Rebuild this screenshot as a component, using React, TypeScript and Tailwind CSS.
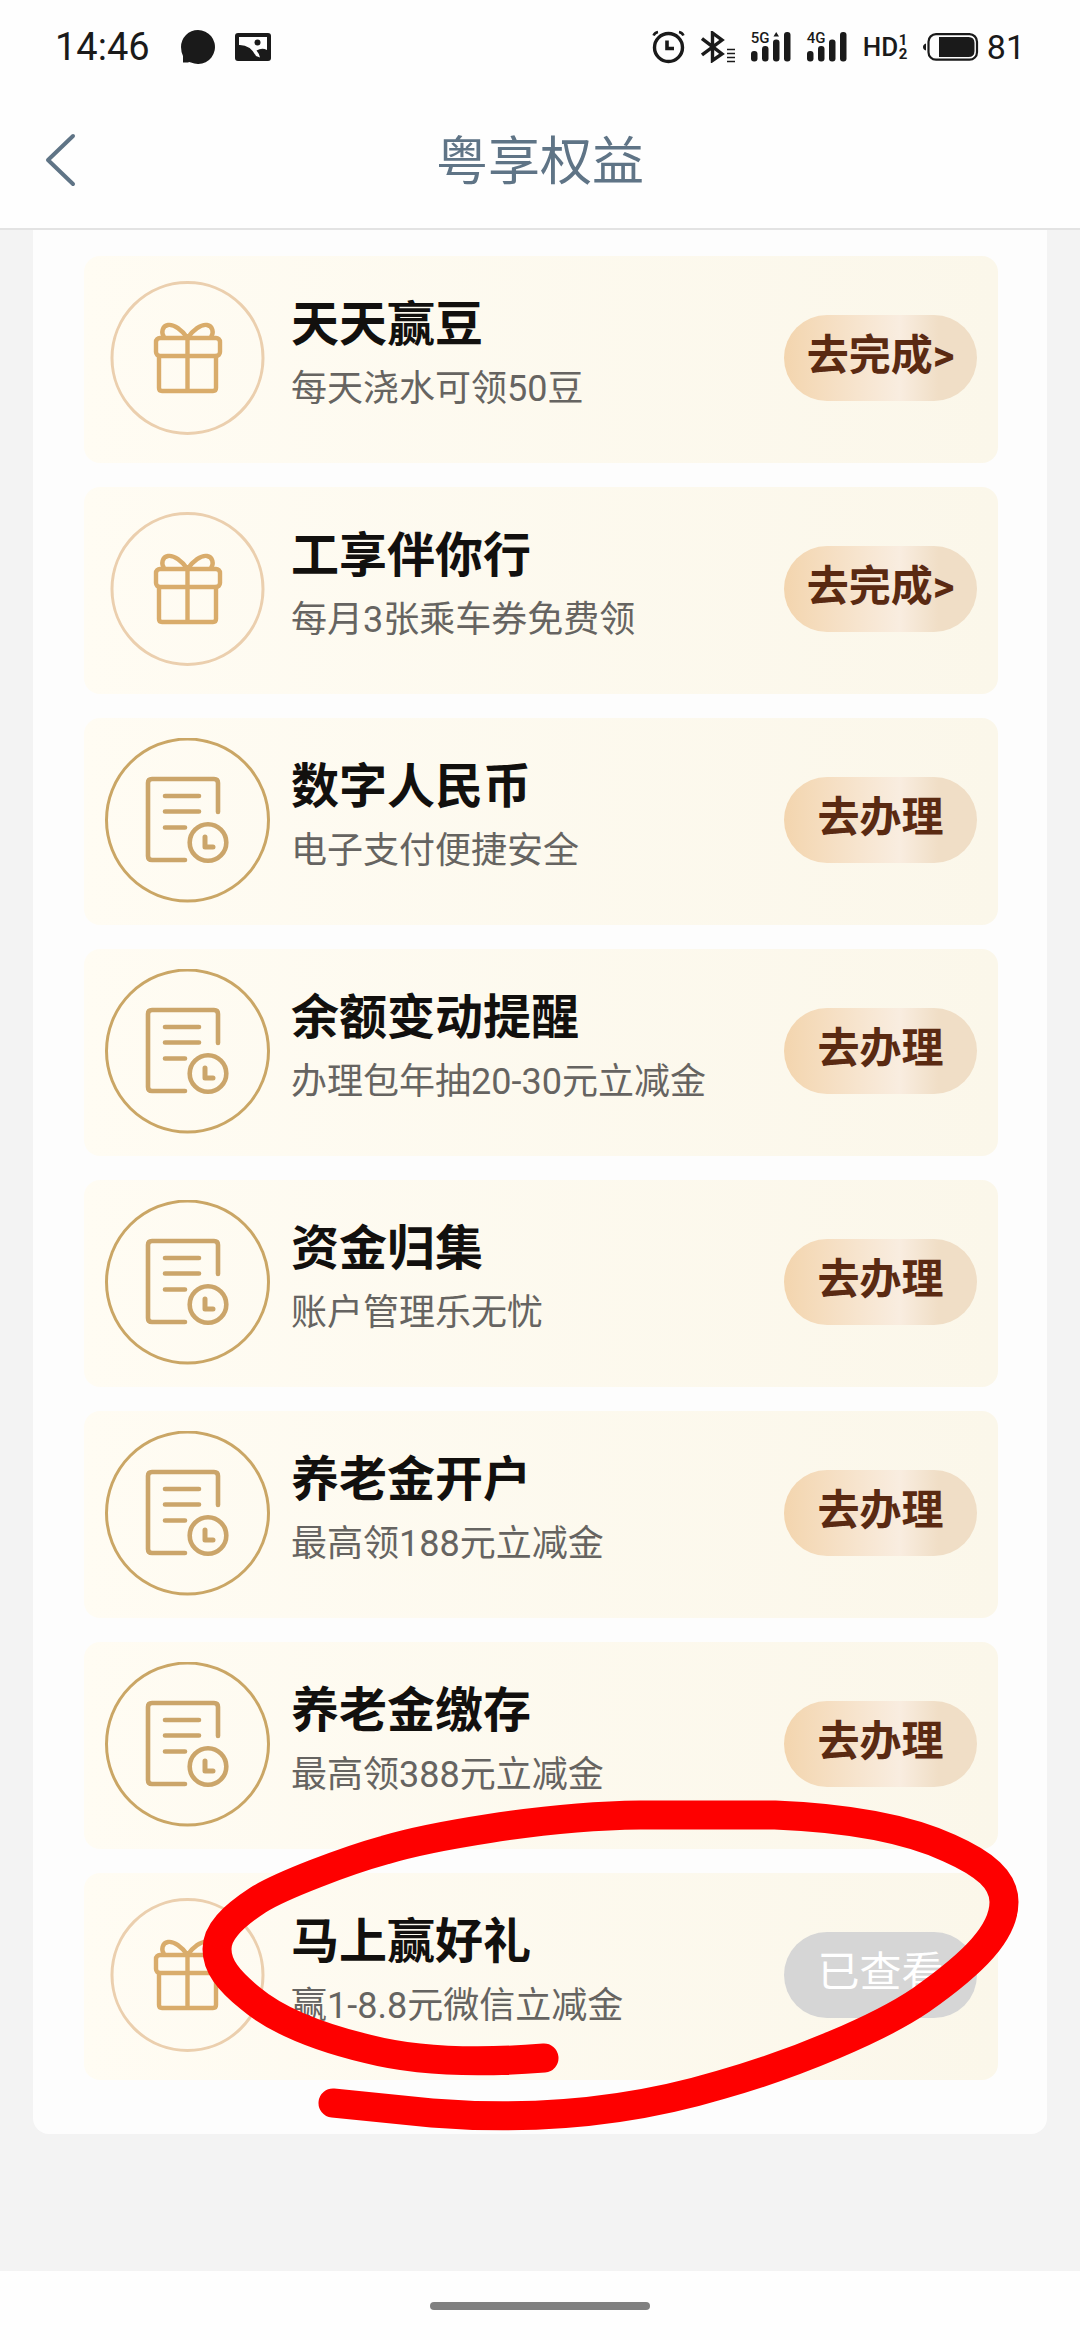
type RewardIcon = "gift" | "document";

interface Reward {
  title: string;
  description: string;
  icon: RewardIcon;
  action: string;
  viewed?: boolean;
}

const REWARDS: Reward[] = [
  { title: "天天赢豆", description: "每天浇水可领50豆", icon: "gift", action: "去完成>" },
  { title: "工享伴你行", description: "每月3张乘车券免费领", icon: "gift", action: "去完成>" },
  { title: "数字人民币", description: "电子支付便捷安全", icon: "document", action: "去办理" },
  { title: "余额变动提醒", description: "办理包年抽20-30元立减金", icon: "document", action: "去办理" },
  { title: "资金归集", description: "账户管理乐无忧", icon: "document", action: "去办理" },
  { title: "养老金开户", description: "最高领188元立减金", icon: "document", action: "去办理" },
  { title: "养老金缴存", description: "最高领388元立减金", icon: "document", action: "去办理" },
  { title: "马上赢好礼", description: "赢1-8.8元微信立减金", icon: "gift", action: "已查看", viewed: true },
];

function GiftIcon() {
  return (
    <svg viewBox="0 0 165 165" className="size-[165px] shrink-0" fill="none" aria-hidden="true">
      <circle cx="82.5" cy="82" r="75.5" stroke="#ebcfae" strokeWidth="3" />
      <g stroke="#d9ac6b" strokeWidth="4.4" strokeLinejoin="round" strokeLinecap="round">
        <rect x="51" y="62" width="64" height="18" rx="4" />
        <path d="M54 80V112Q54 115 57 115H108Q111 115 111 112V80M82.5 62V115" />
        <path d="M82.5 62C77 54 69 48 63 49C57 50 56 57 59 61M82.5 62C88 54 96 48 102 49C108 50 109 57 106 61" />
      </g>
    </svg>
  );
}

function DocumentIcon() {
  return (
    <svg viewBox="0 0 165 165" className="size-[165px] shrink-0" fill="none" aria-hidden="true">
      <circle cx="82.5" cy="82" r="81" stroke="#caa665" strokeWidth="3" />
      <g stroke="#cba56a" strokeWidth="4.6" strokeLinejoin="round" strokeLinecap="round">
        <path d="M113 74V45Q113 41 109 41H47Q43 41 43 45V118Q43 122 47 122H80" />
        <path d="M60 58H94M60 73.5H94M60 89.5H80" />
        <circle cx="103" cy="104.5" r="18.3" />
        <path d="M100 99V109H108" strokeWidth="5" />
      </g>
    </svg>
  );
}

function SignalBars({ network, upload }: { network: string; upload?: boolean }) {
  return (
    <span className="relative block h-8 w-10">
      <span className="absolute -top-px left-0 text-[15px] leading-[16px] font-medium">
        {network}
      </span>
      <svg viewBox="0 0 40 32" className="h-8 w-10" fill="currentColor" aria-hidden="true">
        <rect x="0" y="20" width="6.5" height="10.5" rx="3" />
        <rect x="11" y="15" width="6.5" height="15.5" rx="3" />
        <rect x="22" y="8.5" width="6.5" height="22" rx="3" />
        <rect x="33" y="1" width="6.5" height="29.5" rx="3" />
        {upload && <path d="M22.5 5.5L25.2 1L28 5.5Z" />}
      </svg>
    </span>
  );
}

function StatusBar() {
  return (
    <div className="flex h-[92px] items-center justify-between px-[55px] pt-0.5 text-[#1a1a1a]">
      <div className="flex items-center">
        <span className="w-[126px] text-[38px] leading-[44px]">14:46</span>
        <svg viewBox="0 0 34 34" className="mr-5 size-[34px]" fill="currentColor" aria-hidden="true">
          <path d="M17 0A17 17 0 1 1 10 32.5Q8 31.5 7 32.5H2V26Q0 21.5 0 17A17 17 0 0 1 17 0Z" />
        </svg>
        <svg viewBox="0 0 36 28" className="h-7 w-9" aria-hidden="true">
          <rect width="36" height="28" rx="3" fill="currentColor" />
          <path d="M4 4H32V17Q27 14.5 21.5 17.5Q24.5 21 25 24.5L21 23Q15 11.5 4 12Z" fill="#fefefe" />
          <circle cx="22.5" cy="9.5" r="3" fill="currentColor" />
        </svg>
      </div>

      <div className="flex items-center gap-4">
        <svg viewBox="0 0 34 34" className="size-[34px]" fill="none" stroke="currentColor" aria-hidden="true">
          <circle cx="17.5" cy="17.5" r="14" strokeWidth="3.4" />
          <path d="M16 10.5V18.5H23" strokeWidth="3.6" />
          <path d="M2.5 5.5Q4 2.500 7 2M32.5 5.500Q31 2.500 28 2" strokeWidth="2.6" />
        </svg>
        <svg viewBox="0 0 34 32" className="h-8 w-[34px]" fill="none" stroke="currentColor" aria-hidden="true">
          <path d="M1 7.500L21 23L11.500 29.500V2L21 9L1 24" strokeWidth="3.4" />
          <path d="M26 18.500H34M26 22.500H34M26 26.500H34M26 30.500H34" strokeWidth="1.6" />
        </svg>
        <SignalBars network="5G" upload />
        <SignalBars network="4G" />
        <span className="flex items-center">
          <span className="w-9 text-[26px] leading-8 font-medium">HD</span>
          <span className="flex w-2 flex-col text-[15px] leading-[14px] font-bold">
            <span>1</span>
            <span>2</span>
          </span>
        </span>
        <span className="flex items-center gap-2">
          <svg viewBox="0 0 56 28" className="h-7 w-14" fill="none" aria-hidden="true">
            <path d="M3 10.5Q0 11.5 0 14T3 17.5Z" fill="currentColor" />
            <rect x="5.5" y="1.2" width="48.5" height="25.5" rx="7.5" stroke="currentColor" strokeWidth="2.2" />
            <path d="M16 4H45.5Q51.5 4 51.5 10V18Q51.5 24 45.5 24H16Z" fill="currentColor" />
          </svg>
          <span className="text-[34px] leading-[44px]">81</span>
        </span>
      </div>
    </div>
  );
}

function RewardCard({ reward }: { reward: Reward }) {
  return (
    <li className="relative flex h-[207px] items-center gap-[21px] rounded-2xl bg-linear-to-r from-[#fffcf3] to-[#fbf7ea] px-[21px] pb-[3px]">
      {reward.icon === "gift" ? <GiftIcon /> : <DocumentIcon />}
      <div className="min-w-0 flex-1 pb-0.5">
        <h2 className="text-[48px] leading-[64px] font-bold text-[#12100e]">{reward.title}</h2>
        <p className="text-[36px] leading-[64px] text-[#666461]">{reward.description}</p>
      </div>
      <button
        type="button"
        disabled={reward.viewed}
        className={`h-[86px] w-[193px] shrink-0 rounded-full pb-1 text-[42px] leading-[60px] whitespace-nowrap ${
          reward.viewed
            ? "bg-[#d6d6d6] text-white"
            : "bg-linear-to-r from-[#f3d5ae] via-[#f9ede0] via-60% to-[#f0dec6] to-80% font-bold text-[#5a2a12]"
        }`}
      >
        {reward.action}
      </button>
      {reward.viewed && <HandDrawnCircle />}
    </li>
  );
}

// Red marker stroke, lies over the last card and its neighbours
function HandDrawnCircle() {
  return (
    <svg
      viewBox="200 1790 820 350"
      className="pointer-events-none absolute -top-[83px] left-[116px] h-[350px] w-[820px]"
      fill="none"
      aria-hidden="true"
    >
      <path
        d="M544 2058C470 2064 415 2061 368 2049C318 2037 276 2020 250 1998C228 1980 217 1966 217 1949C217 1932 232 1917 258 1900C280 1886 345 1861 385 1850C425 1838 540 1816 640 1815H775C850 1818 910 1830 949 1848C985 1864 1004 1880 1004 1902C1004 1932 975 1962 921 2000C880 2028 795 2064 720 2085C620 2115 520 2120 432 2113L333 2103"
        stroke="#fe0000"
        strokeWidth="29"
        strokeLinecap="round"
        strokeLinejoin="round"
      />
    </svg>
  );
}

export default function App() {
  return (
    <div className="flex min-h-screen flex-col bg-[#f3f3f3] font-[Roboto,'Noto_Sans_CJK_SC',sans-serif]">
      <header className="border-b-2 border-[#e3e3e3] bg-[#fefefe]">
        <StatusBar />
        <div className="grid h-[136px] grid-cols-[1fr_auto_1fr] items-center pt-1.5 text-[#5f7486]">
          <button type="button" aria-label="返回" className="ml-[42px] size-fit pb-2">
            <svg viewBox="0 0 36 56" className="h-14 w-9" fill="none" aria-hidden="true">
              <path d="M31 5L6 29L31 53" stroke="currentColor" strokeWidth="4" strokeLinecap="round" strokeLinejoin="round" />
            </svg>
          </button>
          <h1 className="text-[52px] leading-[72px]">粤享权益</h1>
        </div>
      </header>

      <main className="flex-1 px-[33px]">
        <ul className="flex flex-col gap-6 rounded-b-2xl bg-[#fdfdfd] pt-[26px] pr-[49px] pb-[54px] pl-[51px]">
          {REWARDS.map((reward) => (
            <RewardCard key={reward.title} reward={reward} />
          ))}
        </ul>
      </main>

      <footer className="flex h-[69px] items-center justify-center bg-[#fefefe]">
        <div className="h-2 w-[220px] rounded-full bg-[#808080]" />
      </footer>
    </div>
  );
}
